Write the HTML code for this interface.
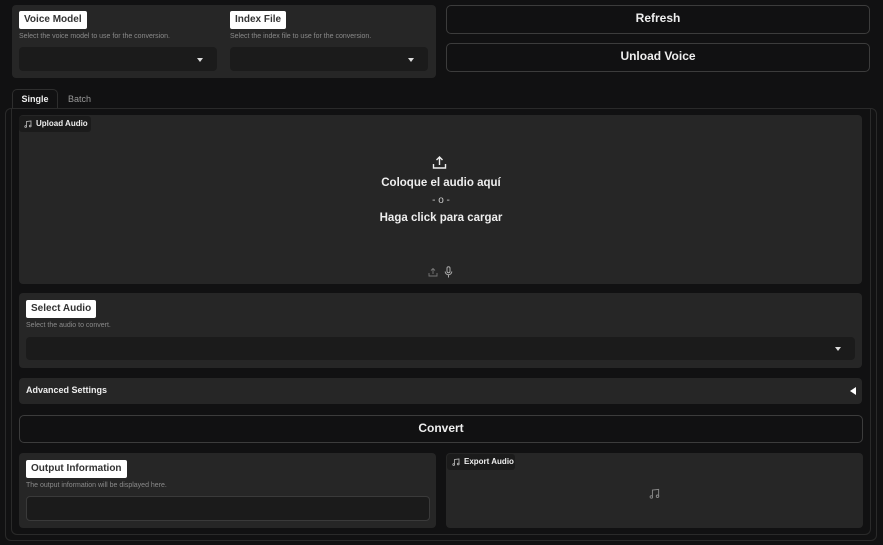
<!DOCTYPE html>
<html><head><meta charset="utf-8"><style>
*{box-sizing:border-box;margin:0;padding:0}
body{width:883px;height:545px;background:#111112;font-family:"Liberation Sans",sans-serif;color:#eee;position:relative;overflow:hidden}
.a{position:absolute}
.panel{background:#262626;border-radius:4px}
.lbl{background:#fff;color:#333;font-size:10px;font-weight:bold;padding:0 5px;line-height:18px;border-radius:2px}
.desc{font-size:7px;color:#8a8a8a}
.dd{background:#1b1b1b;border-radius:4px}
.btn{border:1px solid #3c3c3c;border-radius:5px;background:#111112;color:#eee;font-weight:bold;font-size:12px;text-align:center}
.tri{width:0;height:0;border-left:3px solid transparent;border-right:3px solid transparent;border-top:4px solid #ddd}
</style></head><body>
<div class="a" style="left:5px;top:108px;width:872px;height:433px;border:1px solid #2a2a2a;border-radius:6px"></div>
<div class="a" style="left:11px;top:108px;width:860px;height:427px;border:1px solid #2a2a2a;border-top:none;border-radius:0 0 6px 6px"></div>

<div class="a panel" style="left:12px;top:5px;width:424px;height:73px"></div>
<div class="a lbl" style="left:19px;top:11px">Voice Model</div>
<div class="a desc" style="left:19px;top:33px">Select the voice model to use for the conversion.</div>
<div class="a dd" style="left:19px;top:47px;width:198px;height:24px"><div class="a tri" style="left:178px;top:11px"></div></div>
<div class="a lbl" style="left:230px;top:11px">Index File</div>
<div class="a desc" style="left:230px;top:33px">Select the index file to use for the conversion.</div>
<div class="a dd" style="left:230px;top:47px;width:198px;height:24px"><div class="a tri" style="left:178px;top:11px"></div></div>

<div class="a btn" style="left:446px;top:5px;width:424px;height:29px;line-height:25px">Refresh</div>
<div class="a btn" style="left:446px;top:43px;width:424px;height:29px;line-height:25px">Unload Voice</div>

<div class="a" style="left:12px;top:89px;width:46px;height:20px;border:1px solid #2e2e2e;border-bottom:none;border-radius:5px 5px 0 0;background:#111112;font-size:9px;font-weight:bold;text-align:center;line-height:19px">Single</div>
<div class="a" style="left:68px;top:89px;font-size:9px;color:#999;line-height:20px">Batch</div>
<div class="a" style="left:12px;top:108px;width:859px;height:1px;background:#2a2a2a"></div>

<div class="a panel" style="left:19px;top:115px;width:843px;height:169px"></div>
<div class="a" style="left:19px;top:116px;width:72px;height:16px;background:#1b1b1b;border-radius:3px;font-size:8px;font-weight:bold;line-height:16px;padding-left:17px">Upload Audio
<svg class="a" style="left:5px;top:4px" width="8" height="8" viewBox="0 0 8 8" fill="none" stroke="#bbb" stroke-width="0.8"><path d="M2.5 6.5V1.5L7 1v5"/><circle cx="1.7" cy="6.5" r="0.9"/><circle cx="6.2" cy="6" r="0.9"/></svg></div>
<svg class="a" style="left:432px;top:155px" width="15" height="15" viewBox="0 0 15 15" fill="none" stroke="#eee" stroke-width="1.4"><path d="M7.5 10V2M4.5 5l3-3 3 3M1.5 9v4h12V9"/></svg>
<div class="a" style="left:300px;top:176px;width:282px;text-align:center;font-size:11.5px;font-weight:bold;line-height:14px">Coloque el audio aquí</div>
<div class="a" style="left:300px;top:195px;width:282px;text-align:center;font-size:10px;color:#ccc;line-height:12px">- o -</div>
<div class="a" style="left:300px;top:211px;width:282px;text-align:center;font-size:11.5px;font-weight:bold;line-height:14px">Haga click para cargar</div>
<svg class="a" style="left:428px;top:267px" width="10" height="10" viewBox="0 0 10 10" fill="none" stroke="#777" stroke-width="0.9"><path d="M5 7V1.5M3 3.5l2-2 2 2M1 6v3h8V6"/></svg>
<svg class="a" style="left:444px;top:266px" width="9" height="12" viewBox="0 0 9 12" fill="none" stroke="#aaa" stroke-width="1"><rect x="3" y="0.8" width="3" height="6" rx="1.5"/><path d="M1.2 5.5a3.3 3.3 0 0 0 6.6 0M4.5 9v2.5"/></svg>

<div class="a panel" style="left:19px;top:293px;width:843px;height:75px"></div>
<div class="a lbl" style="left:26px;top:300px">Select Audio</div>
<div class="a desc" style="left:26px;top:322px">Select the audio to convert.</div>
<div class="a dd" style="left:26px;top:337px;width:829px;height:23px"><div class="a tri" style="left:809px;top:10px"></div></div>

<div class="a panel" style="left:19px;top:378px;width:843px;height:26px;font-size:9px;font-weight:bold;line-height:25px;padding-left:7px">Advanced Settings
<div class="a" style="left:831px;top:9px;width:0;height:0;border-top:4px solid transparent;border-bottom:4px solid transparent;border-right:6px solid #fff"></div></div>

<div class="a btn" style="left:19px;top:415px;width:844px;height:28px;line-height:25px">Convert</div>

<div class="a panel" style="left:19px;top:453px;width:417px;height:75px"></div>
<div class="a lbl" style="left:26px;top:460px">Output Information</div>
<div class="a desc" style="left:26px;top:482px">The output information will be displayed here.</div>
<div class="a" style="left:26px;top:496px;width:404px;height:25px;background:#1b1b1b;border:1px solid #3a3a3a;border-radius:4px"></div>

<div class="a panel" style="left:446px;top:453px;width:417px;height:75px"></div>
<div class="a" style="left:447px;top:454px;width:68px;height:16px;background:#1b1b1b;border-radius:3px;font-size:8px;font-weight:bold;line-height:16px;padding-left:17px">Export Audio
<svg class="a" style="left:5px;top:4px" width="8" height="8" viewBox="0 0 8 8" fill="none" stroke="#bbb" stroke-width="0.8"><path d="M2.5 6.5V1.5L7 1v5"/><circle cx="1.7" cy="6.5" r="0.9"/><circle cx="6.2" cy="6" r="0.9"/></svg></div>
<svg class="a" style="left:649px;top:488px" width="11" height="11" viewBox="0 0 8 8" fill="none" stroke="#888" stroke-width="0.7"><path d="M2.5 6.5V1.5L7 1v5"/><circle cx="1.7" cy="6.5" r="0.9"/><circle cx="6.2" cy="6" r="0.9"/></svg>
</body></html>
